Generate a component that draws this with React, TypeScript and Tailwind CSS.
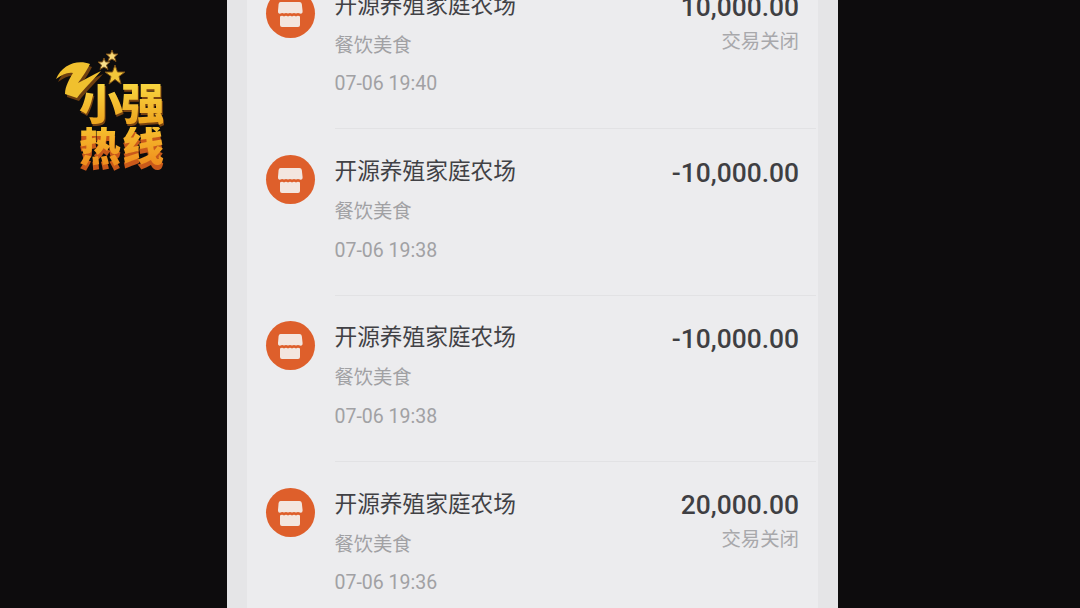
import React from 'react';

const cjk = 'font-["Roboto","Noto_Sans_CJK_SC",sans-serif]';

const records = [
  { time: '07-06 19:40', amount: '10,000.00', status: '交易关闭' },
  { time: '07-06 19:38', amount: '-10,000.00', status: '' },
  { time: '07-06 19:38', amount: '-10,000.00', status: '' },
  { time: '07-06 19:36', amount: '20,000.00', status: '交易关闭' },
];

function ShopIcon() {
  return (
    <div className="w-[49px] h-[49px] shrink-0 rounded-full bg-[#de5f2b] flex items-center justify-center">
      <svg width="49" height="49" viewBox="0 0 49 49">
        <path
          d="M14.5 13 H33.5 Q35.5 13 35.8 15 L36.6 22 Q36.8 25 34 24.6 Q32 23.4 30 24.6 Q28 23.4 26 24.6 Q24 23.4 22 24.6 Q20 23.4 18 24.6 Q16 23.4 14.5 24.6 Q11.8 25 12 22 L12.6 15 Q13 13 14.5 13 Z"
          fill="#f3e6df"
        />
        <path
          d="M14 27.5 Q16 26.2 18 27.5 Q20 26.2 22 27.5 Q24 26.2 26 27.5 Q28 26.2 30 27.5 Q32 26.2 34 27.5 V36 Q34 38 32 38 H16 Q14 38 14 36 Z"
          fill="#f3e6df"
        />
      </svg>
    </div>
  );
}

function Logo() {
  return (
    <div className="relative w-[112px] h-[120px]">
      <svg className="absolute left-0 top-0 overflow-visible" width="112" height="60" viewBox="0 0 112 60">
        <path d="M4 30 C10 16 25 10 38 15 C34 23 29 30 26 34 C32 31 40 26 49 22 C42 30 31 41 25 49 L13 45 C13 37 18 29 21 24 C15 23 10 26 4 30 Z" fill="#6e3f10" />
        <path d="M2 27 C8 13 23 7 36 12 C32 20 27 27 24 31 C30 28 38 23 47 19 C40 27 29 38 23 46 L11 42 C11 34 16 26 19 21 C13 20 8 23 2 27 Z" fill="#f0c02e" />
        <polygon points="58,-2 59.500,2 64,2 60.500,5 62,9.500 58,7 54,9.500 55.500,5 52,2 56.500,2" fill="#f7d774" stroke="#7a4e14" strokeWidth="1" />
        <polygon points="50,6 51.500,10 56,10 52.500,13 54,17.500 50,15 46,17.500 47.500,13 44,10 48.500,10" fill="#f9e08c" stroke="#7a4e14" strokeWidth="1" />
        <polygon points="61,13 63.500,20 71,20 65,24.500 67,32 61,27.500 55,32 57,24.500 51,20 58.500,20" fill="#f3c63a" stroke="#7a4e14" strokeWidth="1" />
      </svg>
      <div className={`absolute left-[25px] top-[32px] text-[44px] leading-[42px] font-black tracking-[-2px] bg-gradient-to-b from-[#f8d53f] to-[#eda21c] bg-clip-text text-transparent drop-shadow-[1px_2px_0_#7a4310] ${cjk}`}>
        小强
      </div>
      <div className={`absolute left-[25px] top-[75px] text-[42px] leading-[40px] font-black tracking-[1px] bg-gradient-to-b from-[#f6c02e] to-[#ee8a1c] bg-clip-text text-transparent drop-shadow-[0_5px_0_#c9591a] ${cjk}`}>
        热线
      </div>
    </div>
  );
}

function Row({ time, amount, status }: { time: string; amount: string; status: string }) {
  return (
    <div className="h-[166.3px] flex pl-[19px] pr-[2px]">
      <div className="pt-[26.7px]">
        <ShopIcon />
      </div>
      <div className="flex-1 ml-[20px] border-t border-[#e2e2e4] flex justify-between pr-[17px]">
        <div className="-ml-[0.5px]">
          <div className="mt-[26.7px] text-[22.7px] leading-[32px] text-[#414145]">开源养殖家庭农场</div>
          <div className="mt-[8px] text-[19.3px] leading-[32px] text-[#a1a1a4]">餐饮美食</div>
          <div className="mt-[6.7px] text-[19.5px] leading-[32px] text-[#a1a1a4]">{time}</div>
        </div>
        <div className="text-right">
          <div className="mt-[26.5px] text-[26.4px] leading-[34px] font-medium text-[#3f3f43]">{amount}</div>
          {status && <div className="mt-[2px] text-[19.4px] leading-[32px] text-[#a8a8ab]">{status}</div>}
        </div>
      </div>
    </div>
  );
}

export default function App() {
  return (
    <div className={`h-[608px] w-[1080px] overflow-hidden bg-[#0d0c0d] flex ${cjk}`}>
      <div className="w-[227px] shrink-0 pl-[54px] pt-[52px]">
        <Logo />
      </div>
      <div className="w-[611px] shrink-0 bg-[#e5e5e7] px-[20px]">
        <div className="h-full bg-[#ececee] overflow-hidden">
          <div className="-mt-[38px]">
            {records.map((r, i) => (
              <Row key={i} time={r.time} amount={r.amount} status={r.status} />
            ))}
          </div>
        </div>
      </div>
    </div>
  );
}
